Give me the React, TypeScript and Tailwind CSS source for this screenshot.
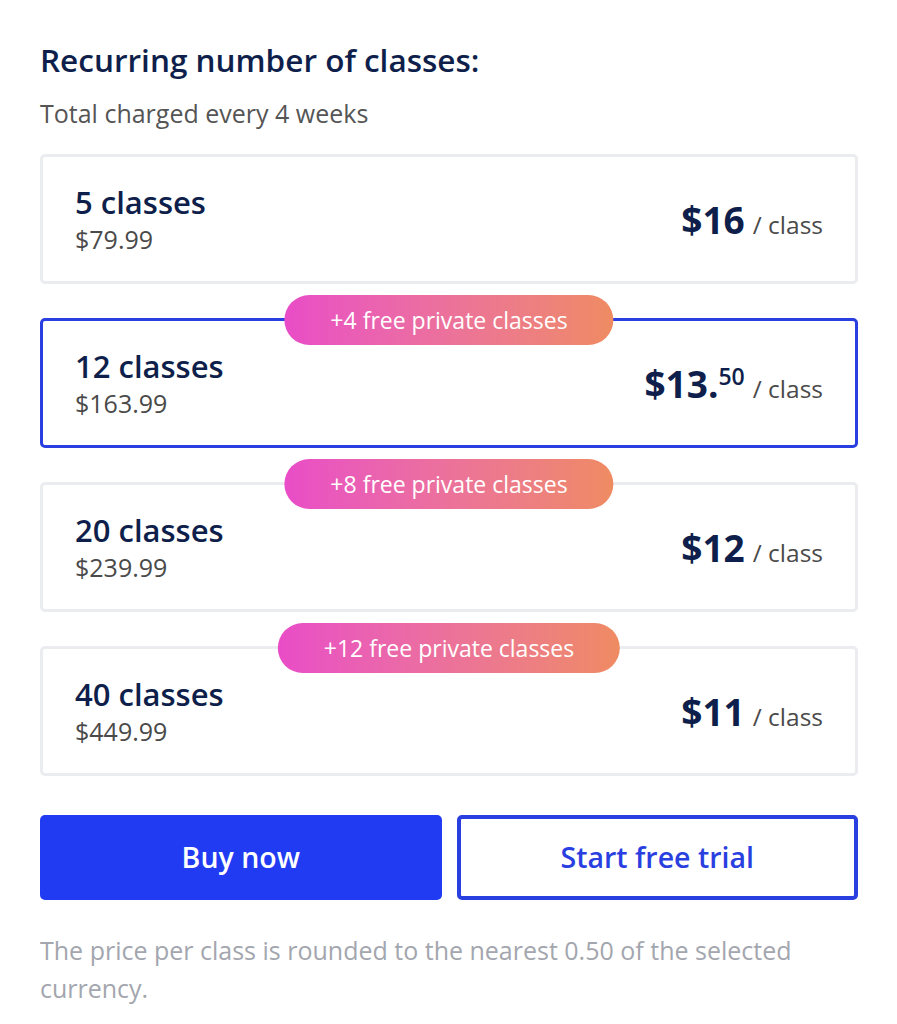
import React from "react";

interface Plan {
  classes: number;
  total: string;
  price: string;
  cents?: string;
  badge?: string;
  selected?: boolean;
}

const plans: Plan[] = [
  { classes: 5, total: "$79.99", price: "$16" },
  {
    classes: 12,
    total: "$163.99",
    price: "$13.",
    cents: "50",
    badge: "+4 free private classes",
    selected: true
  },
  { classes: 20, total: "$239.99", price: "$12", badge: "+8 free private classes" },
  { classes: 40, total: "$449.99", price: "$11", badge: "+12 free private classes" }
];

const PlanCard: React.FC<{ plan: Plan }> = ({ plan }) => (
  <div
    className={`relative flex h-[130px] items-center justify-between rounded-[5px] bg-white px-[32px] ${
      plan.selected
        ? "border-[3px] border-[#2a3fe0]"
        : "border-[3px] border-[#ebecef]"
    }`}
  >
    {plan.badge && (
      <div className="absolute left-1/2 top-[-26px] flex h-[50px] -translate-x-1/2 items-center whitespace-nowrap rounded-full bg-gradient-to-r from-[#e94cc7] to-[#ef8b62] px-[46px] text-[23px] text-white">
        {plan.badge}
      </div>
    )}
    <div className="flex flex-col">
      <span className="text-[31px] font-semibold leading-[38px] text-[#0f1f4b]">
        {plan.classes} classes
      </span>
      <span className="mt-[2px] text-[25px] leading-[32px] text-[#4a4a4a]">
        {plan.total}
      </span>
    </div>
    <div className="flex items-baseline">
      <span className="text-[37px] font-bold leading-none text-[#0f1f4b]">
        {plan.price}
      </span>
      {plan.cents && (
        <span className="relative top-[-13px] text-[23px] font-semibold leading-none text-[#0f1f4b]">
          {plan.cents}
        </span>
      )}
      <span className="ml-[8px] text-[24.5px] leading-none text-[#4a4a4a]">
        / class
      </span>
    </div>
  </div>
);

export default function App() {
  return (
    <div
      className="min-h-[1024px] w-full bg-white px-[40px] pt-[39px]"
      style={{ fontFamily: '"Open Sans", "Noto Sans", sans-serif' }}
    >
      <h2 className="text-[31.5px] font-semibold leading-[42px] text-[#0f1f4b]">
        Recurring number of classes:
      </h2>
      <p className="mt-[15px] text-[25px] leading-[34px] text-[#555555]">
        Total charged every 4 weeks
      </p>

      <div className="mt-[24px] flex w-[818px] flex-col gap-[34px]">
        {plans.map((plan) => (
          <PlanCard key={plan.classes} plan={plan} />
        ))}
      </div>

      <div className="mt-[39px] grid w-[818px] grid-cols-2 gap-[15px]">
        <button className="flex h-[85px] items-center justify-center rounded-[5px] bg-[#203bf2] text-[28.5px] font-semibold text-white">
          Buy now
        </button>
        <button className="flex h-[85px] items-center justify-center rounded-[5px] border-[4px] border-[#2a3fe0] bg-white text-[28.5px] font-semibold text-[#2a3fe0]">
          Start free trial
        </button>
      </div>

      <p className="mt-[31px] w-[800px] text-[25px] leading-[38px] text-[#a3a6ae]">
        The price per class is rounded to the nearest 0.50 of the selected
        currency.
      </p>
    </div>
  );
}
